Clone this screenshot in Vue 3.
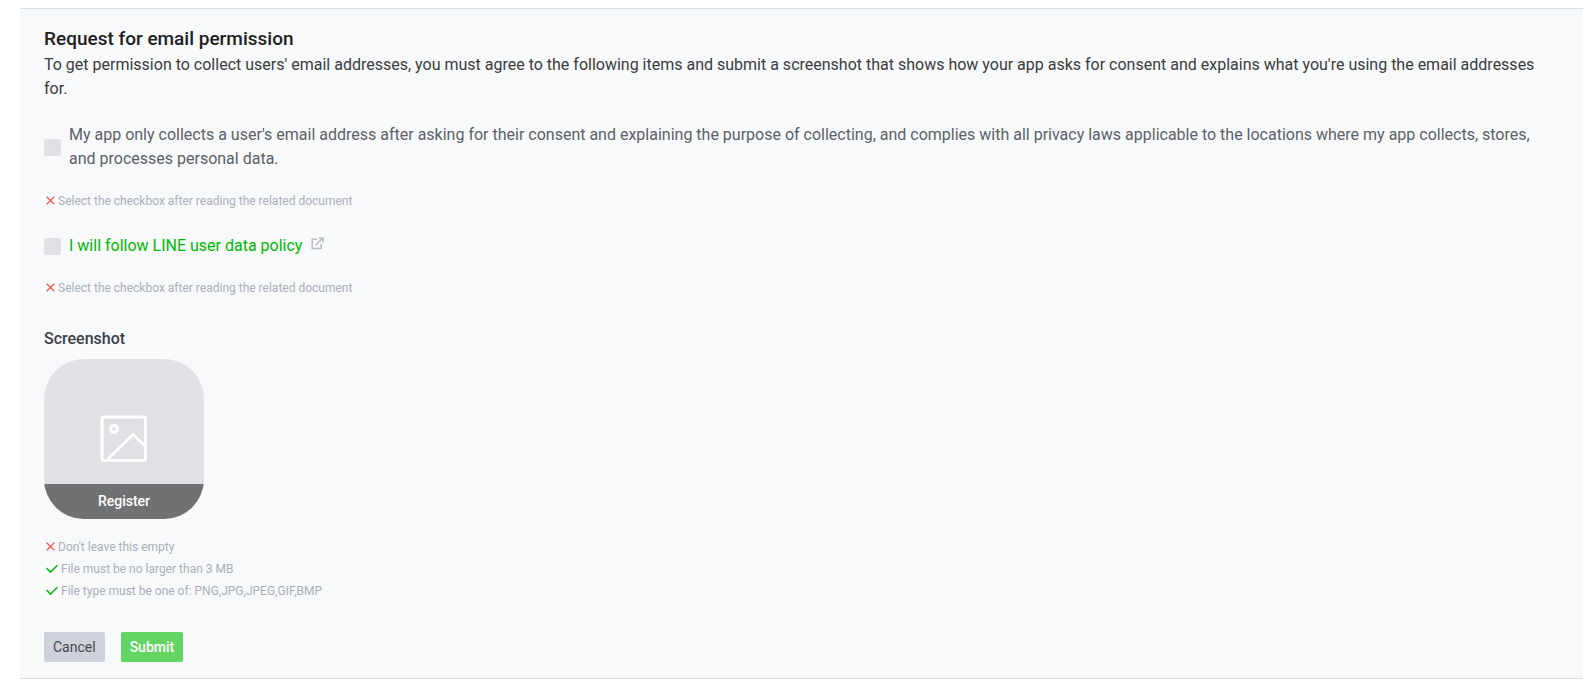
<script setup>
import { ref } from 'vue'

const agreements = ref([
  {
    id: 'consent',
    text: "My app only collects a user's email address after asking for their consent and explaining the purpose of collecting, and complies with all privacy laws applicable to the locations where my app collects, stores, and processes personal data.",
    link: false,
    checked: false,
  },
  { id: 'policy', text: 'I will follow LINE user data policy', link: true, checked: false },
])

const fileRules = [
  { text: "Don't leave this empty", ok: false },
  { text: 'File must be no larger than 3 MB', ok: true },
  { text: 'File type must be one of: PNG,JPG,JPEG,GIF,BMP', ok: true },
]
</script>

<template>
  <form class="panel" @submit.prevent>
    <h2 class="title">Request for email permission</h2>
    <p class="intro">
      To get permission to collect users' email addresses, you must agree to the following items and
      submit a screenshot that shows how your app asks for consent and explains what you're using
      the email addresses for.
    </p>

    <div v-for="item in agreements" :key="item.id" class="agreement">
      <div class="agree-row">
        <input :id="item.id" v-model="item.checked" class="check" type="checkbox" :aria-labelledby="item.id + '-text'" />
        <a v-if="item.link" :id="item.id + '-text'" class="policy" href="#">
          <span>{{ item.text }}</span>
          <svg class="external" width="13" height="18" viewBox="0 0 13 18" aria-hidden="true">
            <path d="M6 2.2H1.2V11.5H10.2V7M4.6 8.2L11.4 1.4M7.8 1H12V5.2" />
          </svg>
        </a>
        <label v-else :id="item.id + '-text'" :for="item.id">{{ item.text }}</label>
      </div>
      <p class="hint">
        <svg class="cross" width="9" height="10" viewBox="0 0 9 10" aria-hidden="true">
          <path d="M0.6 0.6L8.4 8.4M8.4 0.6L0.6 8.4" />
        </svg>
        <span>Select the checkbox after reading the related document</span>
      </p>
    </div>

    <h3 class="subtitle">Screenshot</h3>
    <button class="upload" type="button">
      <span class="preview">
        <svg width="48" height="48" viewBox="0 0 48 48" aria-hidden="true">
          <rect x="2" y="2" width="43.5" height="43.5" rx="2" />
          <circle cx="14" cy="14" r="3.4" />
          <path d="M7.5 44.5L33 19.5L45 31" />
        </svg>
      </span>
      <span class="register">Register</span>
    </button>

    <ul class="rules">
      <li v-for="rule in fileRules" :key="rule.text" class="hint">
        <svg v-if="rule.ok" class="tick" width="12" height="10" viewBox="0 0 12 10" aria-hidden="true">
          <path d="M0.6 4.1L4.6 8.1L11.4 1.3" />
        </svg>
        <svg v-else class="cross" width="9" height="10" viewBox="0 0 9 10" aria-hidden="true">
          <path d="M0.6 0.6L8.4 8.4M8.4 0.6L0.6 8.4" />
        </svg>
        <span>{{ rule.text }}</span>
      </li>
    </ul>

    <div class="actions">
      <button class="btn cancel" type="button">Cancel</button>
      <button class="btn submit" type="submit">Submit</button>
    </div>
  </form>
</template>

<style>
body {
  background: #fff;
}
</style>

<style scoped>
.panel {
  box-sizing: border-box;
  margin: 8px 11px 0 20px;
  padding: 17px 24px 16px;
  border-top: 1px solid #dadfe3;
  border-bottom: 1px solid #dadfe3;
  background: #f8f9fb;
  color: #3a3c3e;
  font-family: Roboto, "Liberation Sans", sans-serif;
  font-size: 16px;
  line-height: 24px;
}
.title,
.subtitle,
.intro,
.hint,
.rules {
  margin: 0;
  padding: 0;
}
.title {
  margin-bottom: 1px;
  color: #1e2022;
  font-size: 19px;
  font-weight: 500;
  line-height: 26px;
}
.intro {
  margin-bottom: 22px;
}
.agreement {
  margin-bottom: 22px;
}
.agree-row {
  display: flex;
  align-items: center;
  gap: 8px;
  margin-bottom: 19px;
  color: #5c6168;
}
.check {
  appearance: none;
  flex: none;
  width: 17px;
  height: 17px;
  margin: 0;
  border-radius: 2px;
  background: #dfe1e6;
}
.check:checked {
  background: #06c755;
}
.policy {
  display: flex;
  align-items: center;
  gap: 9px;
  color: #00b900;
  text-decoration: none;
}
.external {
  fill: none;
  stroke: #b7bcc4;
  stroke-width: 1.5;
}
.hint {
  display: flex;
  align-items: center;
  gap: 3px;
  padding-left: 2px;
  color: #a9afb8;
  font-size: 12px;
  line-height: 22px;
}
.cross,
.tick {
  flex: none;
  fill: none;
}
.cross {
  stroke: #f0483e;
  stroke-width: 1.3;
}
.tick {
  stroke: #12b812;
  stroke-width: 1.5;
}
.subtitle {
  margin: 28px 0 8px;
  color: #3c4046;
  font-size: 16px;
  font-weight: 500;
}
.upload {
  display: flex;
  flex-direction: column;
  width: 160px;
  height: 160px;
  padding: 0;
  overflow: hidden;
  border: 0;
  border-radius: 40px;
  background: #e0e1e5;
  font: inherit;
}
.preview {
  display: flex;
  flex: 1;
  align-items: flex-end;
  justify-content: center;
  width: 100%;
  padding-bottom: 21px;
}
.preview svg {
  display: block;
  fill: none;
  stroke: #fff;
  stroke-width: 3;
}
.register {
  width: 100%;
  background: #707173;
  color: #fff;
  font-size: 14px;
  font-weight: 500;
  line-height: 35px;
}
.rules {
  margin: 17px 0 30px;
  list-style: none;
}
.actions {
  display: flex;
  gap: 16px;
}
.btn {
  height: 30px;
  padding: 0 9px;
  border: 0;
  border-radius: 2px;
  font-family: inherit;
  font-size: 14px;
}
.cancel {
  background: #ced3db;
  color: #44494f;
}
.submit {
  background: #64d465;
  color: #fff;
  font-weight: 500;
}
</style>
